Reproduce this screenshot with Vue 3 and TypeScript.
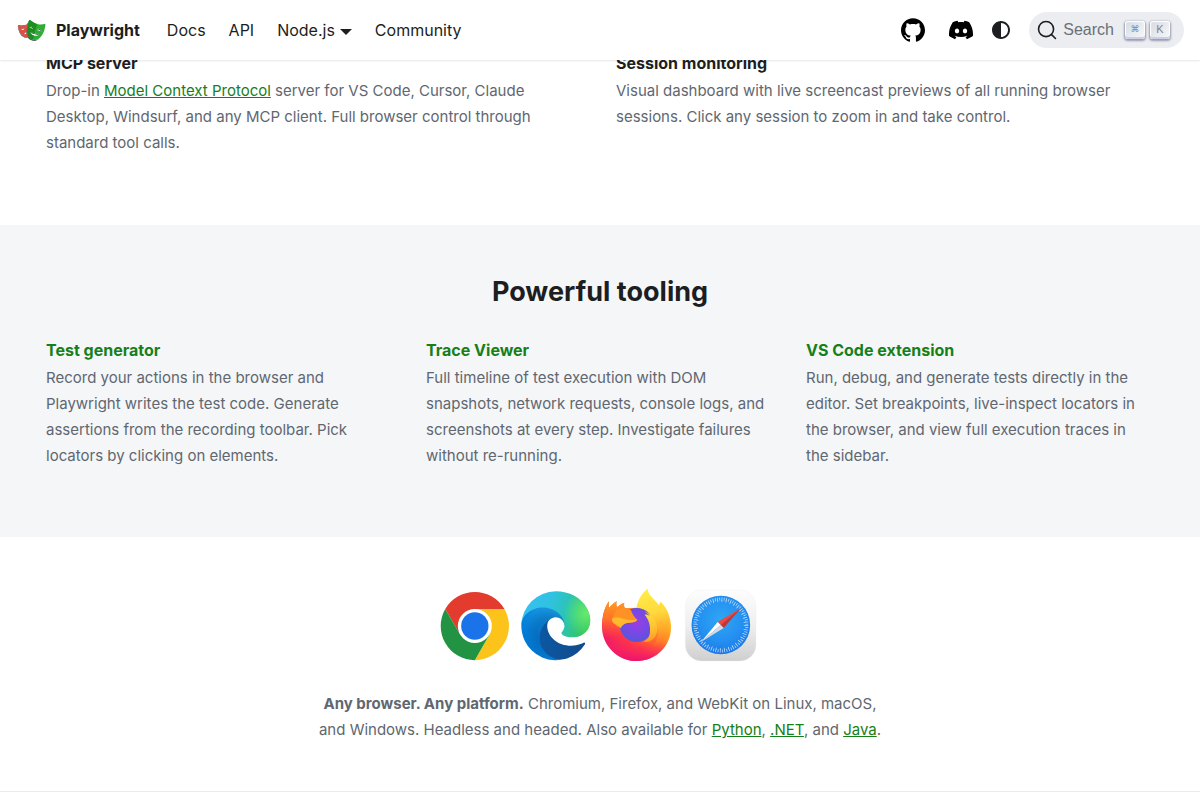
<script setup lang="ts">
interface NavItem {
  label: string
  menu?: boolean
}

interface Tool {
  title: string
  text: string
}

const navItems: NavItem[] = [
  { label: 'Docs' },
  { label: 'API' },
  { label: 'Node.js', menu: true },
  { label: 'Community' },
]

const tools: Tool[] = [
  {
    title: 'Test generator',
    text: 'Record your actions in the browser and Playwright writes the test code. Generate assertions from the recording toolbar. Pick locators by clicking on elements.',
  },
  {
    title: 'Trace Viewer',
    text: 'Full timeline of test execution with DOM snapshots, network requests, console logs, and screenshots at every step. Investigate failures without re-running.',
  },
  {
    title: 'VS Code extension',
    text: 'Run, debug, and generate tests directly in the editor. Set breakpoints, live-inspect locators in the browser, and view full execution traces in the sidebar.',
  },
]
</script>

<template>
  <div class="page">
    <header class="navbar">
      <nav class="nav-left" aria-label="Main">
        <a class="brand" href="#">
          <svg class="brand-logo" viewBox="0 0 400 400" aria-hidden="true">
            <path fill="#2D4552" d="M136.444 221.556C123.558 225.213 115.104 231.625 109.535 238.032C114.869 233.364 122.014 229.08 131.652 226.348C141.51 223.554 149.92 223.574 156.869 224.915V219.481C150.941 218.939 144.145 219.371 136.444 221.556ZM108.946 175.876L61.0895 188.484C61.0895 188.484 61.9617 189.716 63.5767 191.36L104.153 180.668C104.153 180.668 103.578 188.077 98.5847 194.705C108.03 187.559 108.946 175.876 108.946 175.876ZM149.005 288.347C81.6582 306.486 46.0272 228.438 35.2396 187.928C30.2556 169.229 28.0799 155.067 27.5 145.928C27.4377 144.979 27.4665 144.179 27.5336 143.446C24.04 143.657 22.3674 145.473 22.7077 150.721C23.2876 159.855 25.4633 174.016 30.4473 192.721C41.2301 233.225 76.8659 311.273 144.213 293.134C158.872 289.185 169.885 281.992 178.152 272.81C170.532 279.692 160.995 285.112 149.005 288.347ZM161.661 128.11V132.903H188.077C187.535 131.206 186.989 129.677 186.447 128.11H161.661Z" />
            <path fill="#2D4552" d="M193.981 167.584C205.861 170.958 212.144 179.287 215.465 186.658L228.711 190.42C228.711 190.42 226.904 164.623 203.57 157.995C181.741 151.793 168.308 170.124 166.674 172.496C173.024 167.972 182.297 164.268 193.981 167.584ZM299.422 186.777C277.573 180.547 264.145 198.916 262.535 201.255C268.89 196.736 278.158 193.031 289.837 196.362C301.698 199.741 307.976 208.06 311.307 215.436L324.572 219.212C324.572 219.212 322.736 193.41 299.422 186.777ZM286.262 254.795L176.072 223.99C176.072 223.99 177.265 230.038 181.842 237.869L274.617 263.805C282.255 259.386 286.262 254.795 286.262 254.795ZM209.867 321.102C122.618 297.71 133.166 186.543 147.284 133.865C153.097 112.156 159.073 96.0203 164.029 85.204C161.072 84.5953 158.623 86.1529 156.203 91.0746C150.941 101.747 144.212 119.124 137.7 143.45C123.586 196.127 113.038 307.29 200.283 330.682C241.406 341.699 273.442 324.955 297.323 298.659C274.655 319.19 245.714 330.701 209.867 321.102Z" />
            <path fill="#E2574C" d="M161.661 262.296V239.863L99.3324 257.537C99.3324 257.537 103.938 230.777 136.444 221.556C146.302 218.762 154.713 218.781 161.661 220.123V128.11H192.869C189.471 117.61 186.184 109.526 183.423 103.909C178.856 94.612 174.174 100.775 163.545 109.665C156.059 115.919 137.139 129.261 108.668 136.933C80.1966 144.61 57.179 142.574 47.5752 140.911C33.9601 138.562 26.8387 135.572 27.5049 145.928C28.0847 155.062 30.2605 169.224 35.2445 187.928C46.0272 228.433 81.663 306.481 149.01 288.342C166.602 283.602 179.019 274.233 187.626 262.291H161.661V262.296ZM61.0848 188.484L108.946 175.876C108.946 175.876 107.551 194.288 89.6087 199.018C71.6614 203.743 61.0848 188.484 61.0848 188.484Z" />
            <path fill="#2EAD33" d="M341.786 129.174C329.345 131.355 299.498 134.072 262.612 124.185C225.716 114.304 201.236 97.0224 191.537 88.8994C177.788 77.3834 171.74 69.3802 165.788 81.4857C160.526 92.163 153.797 109.54 147.284 133.866C133.171 186.543 122.623 297.706 209.867 321.098C297.093 344.47 343.53 242.92 357.644 190.238C364.157 165.917 367.013 147.5 367.799 135.625C368.695 122.173 359.455 126.078 341.786 129.174ZM166.497 172.756C166.497 172.756 180.246 151.372 203.565 158C226.899 164.628 228.706 190.425 228.706 190.425L166.497 172.756ZM223.42 268.713C182.403 256.698 176.077 223.99 176.077 223.99L286.262 254.796C286.262 254.791 264.021 280.578 223.42 268.713ZM262.377 201.495C262.377 201.495 276.107 180.126 299.422 186.773C322.736 193.411 324.572 219.208 324.572 219.208L262.377 201.495Z" />
            <path fill="#D65348" d="M139.88 246.04L99.3324 257.532C99.3324 257.532 103.737 232.44 133.607 222.496L110.647 136.33L108.663 136.933C80.1918 144.611 57.1742 142.574 47.5704 140.911C33.9554 138.563 26.834 135.572 27.5001 145.929C28.08 155.063 30.2557 169.224 35.2397 187.929C46.0225 228.433 81.6583 306.481 149.005 288.342L150.989 287.719L139.88 246.04ZM61.0848 188.485L108.946 175.876C108.946 175.876 107.551 194.288 89.6087 199.018C71.6615 203.743 61.0848 188.485 61.0848 188.485Z" />
            <path fill="#1D8D22" d="M225.27 269.163L223.415 268.712C182.398 256.698 176.072 223.99 176.072 223.99L232.89 239.872L262.971 124.281L262.607 124.185C225.711 114.304 201.232 97.0224 191.532 88.8994C177.783 77.3834 171.735 69.3802 165.783 81.4857C160.526 92.163 153.797 109.54 147.284 133.866C133.171 186.543 122.623 297.706 209.867 321.097L211.655 321.5L225.27 269.163ZM166.497 172.756C166.497 172.756 180.246 151.372 203.565 158C226.899 164.628 228.706 190.425 228.706 190.425L166.497 172.756Z" />
            <path fill="#C04B41" d="M141.946 245.451L131.072 248.537C133.641 263.019 138.169 276.917 145.276 289.195C146.513 288.922 147.74 288.687 149 288.342C152.302 287.451 155.364 286.348 158.312 285.145C150.371 273.361 145.118 259.789 141.946 245.451ZM137.7 143.451C132.112 164.307 127.113 194.326 128.489 224.436C130.952 223.367 133.554 222.371 136.444 221.551L138.457 221.101C136.003 188.939 141.308 156.165 147.284 133.866C148.799 128.225 150.318 122.978 151.832 118.085C149.393 119.637 146.767 121.228 143.776 122.867C141.759 129.093 139.722 135.898 137.7 143.451Z" />
          </svg>
          <b>Playwright</b>
        </a>
        <a v-for="item in navItems" :key="item.label" class="nav-link" :class="{ 'has-menu': item.menu }" href="#">{{ item.label }}</a>
      </nav>

      <div class="nav-right">
        <a class="icon-link" href="#" aria-label="GitHub repository">
          <svg viewBox="0 0 24 24" aria-hidden="true">
            <path d="M12 .297c-6.63 0-12 5.373-12 12 0 5.303 3.438 9.8 8.205 11.385.6.113.82-.258.82-.577 0-.285-.01-1.04-.015-2.04-3.338.724-4.042-1.61-4.042-1.61C4.422 18.07 3.633 17.7 3.633 17.7c-1.087-.744.084-.729.084-.729 1.205.084 1.838 1.236 1.838 1.236 1.07 1.835 2.809 1.305 3.495.998.108-.776.417-1.305.76-1.605-2.665-.3-5.466-1.332-5.466-5.93 0-1.31.465-2.38 1.235-3.22-.135-.303-.54-1.523.105-3.176 0 0 1.005-.322 3.3 1.23.96-.267 1.98-.399 3-.405 1.02.006 2.04.138 3 .405 2.28-1.552 3.285-1.23 3.285-1.23.645 1.653.24 2.873.12 3.176.765.84 1.23 1.91 1.23 3.22 0 4.61-2.805 5.625-5.475 5.92.42.36.81 1.096.81 2.22 0 1.606-.015 2.896-.015 3.286 0 .315.21.69.825.57C20.565 22.092 24 17.592 24 12.297c0-6.627-5.373-12-12-12" />
          </svg>
        </a>
        <a class="icon-link" href="#" aria-label="Discord server">
          <svg viewBox="0 0 24 24" aria-hidden="true">
            <path d="M20.317 4.3698a19.7913 19.7913 0 00-4.8851-1.5152.0741.0741 0 00-.0785.0371c-.211.3753-.4447.8648-.6083 1.2495-1.8447-.2762-3.68-.2762-5.4868 0-.1636-.3933-.4058-.8742-.6177-1.2495a.077.077 0 00-.0785-.037 19.7363 19.7363 0 00-4.8852 1.515.0699.0699 0 00-.0321.0277C.5334 9.0458-.319 13.5799.0992 18.0578a.0824.0824 0 00.0312.0561c2.0528 1.5076 4.0413 2.4228 5.9929 3.0294a.0777.0777 0 00.0842-.0276c.4616-.6304.8731-1.2952 1.226-1.9942a.076.076 0 00-.0416-.1057c-.6528-.2476-1.2743-.5495-1.8722-.8923a.077.077 0 01-.0076-.1277c.1258-.0943.2517-.1923.3718-.2914a.0743.0743 0 01.0776-.0105c3.9278 1.7933 8.18 1.7933 12.0614 0a.0739.0739 0 01.0785.0095c.1202.099.246.1981.3728.2924a.077.077 0 01-.0066.1276 12.2986 12.2986 0 01-1.873.8914.0766.0766 0 00-.0407.1067c.3604.698.7719 1.3628 1.225 1.9932a.076.076 0 00.0842.0286c1.961-.6067 3.9495-1.5219 6.0023-3.0294a.077.077 0 00.0313-.0552c.5004-5.177-.8382-9.6739-3.5485-13.6604a.061.061 0 00-.0312-.0286zM8.02 15.3312c-1.1825 0-2.1569-1.0857-2.1569-2.419 0-1.3332.9555-2.4189 2.157-2.4189 1.2108 0 2.1757 1.0952 2.1568 2.419 0 1.3332-.9555 2.4189-2.1569 2.4189zm7.9748 0c-1.1825 0-2.1569-1.0857-2.1569-2.419 0-1.3332.9554-2.4189 2.1569-2.4189 1.2108 0 2.1757 1.0952 2.1568 2.419 0 1.3332-.946 2.4189-2.1568 2.4189Z" />
          </svg>
        </a>
        <button class="theme-toggle" type="button" aria-label="Switch between dark and light mode">
          <svg viewBox="0 0 24 24" aria-hidden="true">
            <path d="m12 21c4.971 0 9-4.029 9-9s-4.029-9-9-9-9 4.029-9 9 4.029 9 9 9zm4.95-13.95c1.313 1.313 2.05 3.093 2.05 4.95s-0.738 3.637-2.05 4.95c-1.313 1.313-3.093 2.05-4.95 2.05v-14c1.857 0 3.637 0.737 4.95 2.05z" />
          </svg>
        </button>
        <button class="search" type="button">
          <svg class="search-icon" viewBox="0 0 20 20" aria-hidden="true">
            <path d="M14.386 14.386l4.0877 4.0877-4.0877-4.0877c-2.9418 2.9419-7.7115 2.9419-10.6533 0-2.9419-2.9418-2.9419-7.7115 0-10.6533 2.9418-2.9419 7.7115-2.9419 10.6533 0 2.9419 2.9418 2.9419 7.7115 0 10.6533z" />
          </svg>
          <span class="search-label">Search</span>
          <kbd class="key key-small">⌘</kbd>
          <kbd class="key">K</kbd>
        </button>
      </div>
    </header>

    <main>
      <section class="features">
        <div class="container columns two">
          <article>
            <h3>MCP server</h3>
            <p>
              Drop-in <a href="#">Model Context Protocol</a> server for VS Code, Cursor, Claude Desktop,
              Windsurf, and any MCP client. Full browser control through standard tool calls.
            </p>
          </article>
          <article>
            <h3>Session monitoring</h3>
            <p>
              Visual dashboard with live screencast previews of all running browser sessions. Click any
              session to zoom in and take control.
            </p>
          </article>
        </div>
      </section>

      <section class="tooling">
        <h2>Powerful tooling</h2>
        <div class="container columns three">
          <article v-for="tool in tools" :key="tool.title">
            <h3><a href="#">{{ tool.title }}</a></h3>
            <p>{{ tool.text }}</p>
          </article>
        </div>
      </section>

      <section class="browsers">
        <div class="logos">
          <svg viewBox="27 27 216 216" role="img" aria-label="Chromium">
            <path fill="#e33b2e" d="M45.7 87A102.5 102.5 0 0 1 223.3 87H134.5L90.3 163.5Z" />
            <path fill="#fcc31a" d="M134.5 87H223.3A102.5 102.5 0 0 1 134.5 240.5L178.7 163.5Z" />
            <path fill="#229342" d="M45.7 87A102.5 102.5 0 0 0 134.5 240.5L178.7 163.5H90.3Z" />
            <circle cx="134.5" cy="138" r="51" fill="#fff" />
            <circle cx="134.5" cy="138" r="41" fill="#1a73e8" />
          </svg>

          <svg viewBox="27 27 216 216" role="img" aria-label="Microsoft Edge">
            <defs>
              <linearGradient id="edge-deep" gradientUnits="userSpaceOnUse" x1="63" y1="177" x2="242" y2="177">
                <stop offset="0" stop-color="#0c59a4" />
                <stop offset="1" stop-color="#114a8b" />
              </linearGradient>
              <linearGradient id="edge-mid" gradientUnits="userSpaceOnUse" x1="157" y1="105" x2="46" y2="226">
                <stop offset="0" stop-color="#1b9de2" />
                <stop offset=".16" stop-color="#1595df" />
                <stop offset=".67" stop-color="#0680d7" />
                <stop offset="1" stop-color="#0078d4" />
              </linearGradient>
              <radialGradient id="edge-mid-shade" gradientUnits="userSpaceOnUse" cx="118" cy="160" r="100">
                <stop offset=".6" stop-color="#034a92" stop-opacity=".3" />
                <stop offset="1" stop-color="#034a92" stop-opacity="0" />
              </radialGradient>
              <linearGradient id="edge-top" gradientUnits="userSpaceOnUse" x1="20" y1="70" x2="255" y2="135">
                <stop offset="0" stop-color="#35c1f1" />
                <stop offset=".35" stop-color="#2fc2df" />
                <stop offset=".6" stop-color="#2bc3b8" />
                <stop offset="1" stop-color="#36c752" />
              </linearGradient>
              <radialGradient id="edge-lime" gradientUnits="userSpaceOnUse" cx="246" cy="86" r="85">
                <stop offset="0" stop-color="#66eb6e" />
                <stop offset="1" stop-color="#66eb6e" stop-opacity="0" />
              </radialGradient>
            </defs>
            <g transform="translate(24.2 30) scale(.808)">
              <path fill="url(#edge-deep)" d="M235.68 195.46a93.73 93.73 0 0 1-10.54 4.71 101.87 101.87 0 0 1-35.9 6.46c-47.32 0-88.54-32.55-88.54-74.32A31.48 31.48 0 0 1 117.13 105c-42.8 1.8-53.8 46.4-53.8 72.53 0 73.88 68.09 81.37 82.76 81.37 7.91 0 19.84-2.3 27-4.56l1.31-.44A128.34 128.34 0 0 0 241 201.1a4 4 0 0 0-5.32-5.64Z" />
              <path fill="url(#edge-mid)" d="M110.34 246.34A79.2 79.2 0 0 1 87.6 225a80.72 80.72 0 0 1 29.53-120c3.12-1.47 8.45-4.13 15.54-4A32.35 32.35 0 0 1 158.33 114a31.88 31.88 0 0 1 6.36 18.66c0-.21 24.46-79.6-80-79.6-43.9 0-80 41.66-80 78.21a130.15 130.15 0 0 0 12.11 56 128 128 0 0 0 156.38 67.11 75.55 75.55 0 0 1-62.78-8Z" />
              <path fill="url(#edge-mid-shade)" d="M110.34 246.34A79.2 79.2 0 0 1 87.6 225a80.72 80.72 0 0 1 29.53-120c3.12-1.47 8.45-4.13 15.54-4A32.35 32.35 0 0 1 158.33 114a31.88 31.88 0 0 1 6.36 18.66c0-.21 24.46-79.6-80-79.6-43.9 0-80 41.66-80 78.21a130.15 130.15 0 0 0 12.11 56 128 128 0 0 0 156.38 67.11 75.55 75.55 0 0 1-62.78-8Z" />
              <path fill="url(#edge-top)" d="M156.94 153.78c-.81 1.05-3.3 2.5-3.3 5.66 0 2.61 1.7 5.12 4.72 7.23 14.38 10 41.49 8.68 41.56 8.68A59.56 59.56 0 0 0 230.19 167a61.38 61.38 0 0 0 30.43-52.88c.26-22.41-8-37.31-11.34-43.91C228.09 28.76 182.35 4.92 132.61 4.92a128 128 0 0 0-128 126.2c.48-36.54 36.8-66.05 80-66.05 3.5 0 23.46.34 42 10.07 16.34 8.58 24.9 18.94 30.85 29.21 6.18 10.67 7.28 24.15 7.28 29.52S162 147.2 156.94 153.78Z" />
              <path fill="url(#edge-lime)" d="M156.94 153.78c-.81 1.05-3.3 2.5-3.3 5.66 0 2.61 1.7 5.12 4.72 7.23 14.38 10 41.49 8.68 41.56 8.68A59.56 59.56 0 0 0 230.19 167a61.38 61.38 0 0 0 30.43-52.88c.26-22.41-8-37.31-11.34-43.91C228.09 28.76 182.35 4.92 132.61 4.92a128 128 0 0 0-128 126.2c.48-36.54 36.8-66.05 80-66.05 3.5 0 23.46.34 42 10.07 16.34 8.58 24.9 18.94 30.85 29.21 6.18 10.67 7.28 24.15 7.28 29.52S162 147.2 156.94 153.78Z" />
            </g>
          </svg>

          <svg viewBox="27 27 216 216" role="img" aria-label="Firefox">
            <defs>
              <linearGradient id="fox-body" gradientUnits="userSpaceOnUse" x1="215" y1="75" x2="75" y2="225">
                <stop offset="0" stop-color="#ffe23f" />
                <stop offset=".3" stop-color="#ff9a22" />
                <stop offset=".5" stop-color="#ff6a2c" />
                <stop offset=".72" stop-color="#ff3a45" />
                <stop offset="1" stop-color="#f01a68" />
              </linearGradient>
              <linearGradient id="fox-cheek" gradientUnits="userSpaceOnUse" x1="60" y1="65" x2="60" y2="175">
                <stop offset="0" stop-color="#ff9a20" />
                <stop offset=".45" stop-color="#ff7428" />
                <stop offset="1" stop-color="#ff4a3c" stop-opacity="0" />
              </linearGradient>
              <linearGradient id="fox-bottom" gradientUnits="userSpaceOnUse" x1="128" y1="185" x2="128" y2="243">
                <stop offset="0" stop-color="#ff2f55" stop-opacity="0" />
                <stop offset="1" stop-color="#ec1270" />
              </linearGradient>
              <linearGradient id="fox-flame" gradientUnits="userSpaceOnUse" x1="165" y1="27" x2="195" y2="205">
                <stop offset="0" stop-color="#ffee4a" />
                <stop offset=".4" stop-color="#ffd93c" />
                <stop offset=".65" stop-color="#ffae2b" />
                <stop offset="1" stop-color="#ff7a2a" stop-opacity="0" />
              </linearGradient>
              <radialGradient id="fox-globe" gradientUnits="userSpaceOnUse" cx="128" cy="128" r="56">
                <stop offset="0" stop-color="#9a3fe2" />
                <stop offset=".5" stop-color="#7d46e6" />
                <stop offset="1" stop-color="#5a55dc" />
              </radialGradient>
              <linearGradient id="fox-crescent" gradientUnits="userSpaceOnUse" x1="160" y1="94" x2="175" y2="185">
                <stop offset="0" stop-color="#ffe141" />
                <stop offset=".6" stop-color="#ffbe30" />
                <stop offset="1" stop-color="#ff9428" />
              </linearGradient>
            </defs>
            <path fill="url(#fox-body)" d="M45 63C43 70 44 77 46 83C53 75 60 69 68 64C66 70 67 77 69 82C75 76 83 71 91 68C89 74 90 80 93 85L127 83L196 78L199 65C216 79 229 104 231 135C235 195 187 243 128 243C71 243 24 197 24 140C24 110 31 83 45 63Z" />
            <path fill="url(#fox-cheek)" d="M45 63C43 70 44 77 46 83C53 75 60 69 68 64C66 70 67 77 69 82C75 76 83 71 91 68C89 74 90 80 93 85L110 92L90 175H30C20 140 25 90 45 63Z" />
            <path fill="url(#fox-bottom)" d="M25 155C34 204 77 243 128 243C184 243 228 199 231 150C215 200 65 215 25 155Z" />
            <path fill="url(#fox-flame)" d="M127 83C132 61 143 38 161 27C163 47 182 57 195 76C197 72 198 69 199 65C212 82 222 94 224 112C228 142 205 192 172 202C193 184 196 158 187 134C178 110 156 89 127 83Z" />
            <circle cx="128" cy="135" r="51" fill="url(#fox-globe)" />
            <path fill="url(#fox-crescent)" d="M152 104C158 103 163 105 168 109C163 103 157 98 151 94C172 102 190 122 190 148C190 164 181 177 168 184C160 187 154 187 148 184C160 180 167 170 168 156C170 136 164 118 152 104Z" />
            <path fill="#ff9224" d="M70 88C79 84 88 84 95 85C102 86 107 88 111 91C115 103 121 112 130 119C122 130 109 126 99 129C89 132 83 137 81 144C70 142 60 133 54 118C58 106 62 96 70 88Z" />
            <path fill="#ffb92e" d="M53 117C62 111 76 112 87 116C99 120 111 122 130 119C122 128 109 126 99 129C88 132 83 137 80 144C76 134 64 135 59 130C56 127 54 122 53 117Z" />
          </svg>

          <svg viewBox="27 27 216 216" role="img" aria-label="Safari">
            <defs>
              <linearGradient id="safari-tile" x1="0" y1="0" x2="0" y2="1">
                <stop offset="0" stop-color="#fdfdfd" />
                <stop offset=".5" stop-color="#efefef" />
                <stop offset="1" stop-color="#cfcfcf" />
              </linearGradient>
              <radialGradient id="safari-dial" cx=".5" cy=".4" r=".62">
                <stop offset="0" stop-color="#2fa6f5" />
                <stop offset=".6" stop-color="#2490f1" />
                <stop offset="1" stop-color="#1b74e4" />
              </radialGradient>
            </defs>
            <rect x="28" y="30" width="212" height="213" rx="48" fill="url(#safari-tile)" stroke="#ececec" stroke-width="1" />
            <circle cx="134.5" cy="135" r="88" fill="url(#safari-dial)" />
            <circle cx="134.5" cy="135" r="78" fill="none" stroke="#c4e2fc" stroke-width="9" stroke-dasharray="2.2 4.607" />
            <circle cx="134.5" cy="135" r="72" fill="none" stroke="#c4e2fc" stroke-width="6" stroke-dasharray="2.2 10.366" />
            <path fill="#f0483e" d="M195 84L125 126L134 135Z" />
            <path fill="#c93430" d="M195 84L143 144L134 135Z" />
            <path fill="#fff" d="M75 186L125 126L134 135Z" />
            <path fill="#d5dbe2" d="M75 186L143 144L134 135Z" />
          </svg>
        </div>
        <p>
          <b>Any browser. Any platform.</b> Chromium, Firefox, and WebKit on Linux, macOS, and Windows.
          Headless and headed. Also available for <a href="#">Python</a>, <a href="#">.NET</a>, and
          <a href="#">Java</a>.
        </p>
      </section>
    </main>
  </div>
</template>

<style>
body {
  margin: 0;
  background: #fff;
  overflow: hidden;
}
</style>

<style scoped>
.page {
  font-family: Inter, "Liberation Sans", sans-serif;
  font-size: 16px;
  line-height: 26px;
  color: #1c1e21;
}

.navbar {
  position: sticky;
  top: 0;
  z-index: 2;
  box-sizing: border-box;
  display: flex;
  justify-content: space-between;
  align-items: center;
  height: 60px;
  padding: 0 16px;
  background: #fff;
  box-shadow: 0 1px 2px 0 rgba(0, 0, 0, 0.1);
}

.nav-left,
.nav-right {
  display: flex;
  align-items: center;
}

.brand {
  display: flex;
  align-items: center;
  gap: 8px;
  margin-right: 16px;
  color: inherit;
  text-decoration: none;
}

.brand b {
  font-weight: 700;
}

.brand-logo {
  width: 32px;
  height: 32px;
}

.nav-left {
  margin-right: 16px;
}

.nav-link {
  padding: 0 12px 0 11px;
  color: inherit;
  text-decoration: none;
}

.has-menu {
  display: flex;
  align-items: center;
  gap: 5px;
}

.has-menu::after {
  content: "";
  margin-top: 3px;
  border: 6px solid transparent;
  border-top-color: currentColor;
  border-bottom: 0;
}

.icon-link {
  display: flex;
  padding: 12px;
}

.icon-link svg {
  width: 24px;
  height: 24px;
  fill: #000;
}

.theme-toggle {
  display: flex;
  align-items: center;
  justify-content: center;
  width: 32px;
  height: 32px;
  margin-right: 12px;
  padding: 0;
  border: 0;
  background: none;
}

.theme-toggle svg {
  width: 24px;
  height: 24px;
  fill: #1c1e21;
}

.search {
  display: flex;
  align-items: center;
  height: 36px;
  padding: 0 12px 0 8px;
  border: 0;
  border-radius: 18px;
  background: #ebedf0;
  color: #6a7078;
  font-family: "Liberation Sans", Arial, sans-serif;
  font-size: 16px;
}

.search-icon {
  width: 20px;
  height: 20px;
  fill: none;
  stroke: #1c1e21;
  stroke-width: 1.6;
  stroke-linecap: round;
  stroke-linejoin: round;
}

.search-label {
  padding: 0 11px 0 6px;
}

.key {
  display: flex;
  align-items: center;
  justify-content: center;
  box-sizing: border-box;
  width: 20px;
  height: 18px;
  margin-right: 5px;
  padding-bottom: 2px;
  border-radius: 3px;
  background: linear-gradient(-225deg, #d5dbe4, #f8f8f8);
  box-shadow: inset 0 -2px 0 0 #cdcde6, inset 0 0 1px 1px #fff, 0 1px 2px 1px rgba(30, 35, 90, 0.4);
  color: #7f8497;
  font-family: "Liberation Sans", Arial, sans-serif;
  font-size: 11px;
}

.key:last-child {
  margin-right: 2px;
}

.key-small {
  font-family: "DejaVu Sans", sans-serif;
  font-size: 9px;
}

.container {
  box-sizing: border-box;
  max-width: 1140px;
  margin: 0 auto;
}

.columns {
  display: grid;
}

.two {
  grid-template-columns: repeat(2, 1fr);
}

.three {
  grid-template-columns: repeat(3, 1fr);
}

article {
  padding: 0 20px 0 16px;
}

h2,
h3,
p {
  margin: 0;
}

h2 {
  margin-bottom: 27px;
  font-size: 27px;
  font-weight: 700;
  line-height: 36px;
  text-align: center;
}

h3 {
  margin-bottom: 1px;
  font-size: 16px;
  font-weight: 700;
  line-height: 27px;
}

p {
  color: #606770;
  font-size: 15px;
}

p a {
  color: #15801a;
  text-decoration: underline;
}

h3 a {
  color: #15801a;
  text-decoration: none;
}

.features {
  margin-top: -10px;
  padding-bottom: 69px;
}

.tooling {
  padding: 49px 0 68px;
  background: #f5f6f8;
}

.browsers {
  padding: 52px 16px 48px;
  border-bottom: 1px solid #ebebeb;
  text-align: center;
}

.logos {
  display: flex;
  justify-content: center;
  gap: 10px;
  margin-bottom: 30px;
  padding-right: 4px;
}

.logos svg {
  width: 72px;
  height: 72px;
  overflow: visible;
}

.browsers p {
  max-width: 576px;
  margin: 0 auto;
}
</style>
